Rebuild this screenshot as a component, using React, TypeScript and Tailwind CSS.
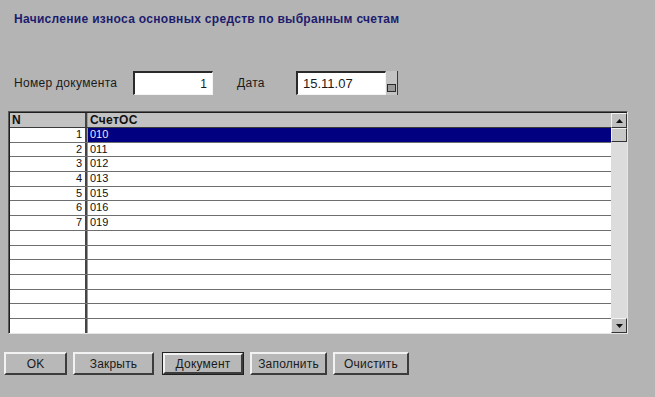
import React from "react";

const rows = ["010", "011", "012", "013", "015", "016", "019"];

function Btn({ label, w, def }: { label: string; w: string; def?: boolean }) {
  return (
    <div className={`${w} h-[23px] ${def ? "border border-[#202020]" : ""}`}>
      <div className="w-full h-full border-t-2 border-l-2 border-t-[#f2f2f2] border-l-[#f2f2f2] border-b-2 border-r-2 border-b-[#3c3c3c] border-r-[#3c3c3c] bg-[#b8b8b8] flex items-center justify-center text-[12px] text-[#1a1a1a] tracking-[0.2px]">
        {label}
      </div>
    </div>
  );
}

export default function App() {
  const bodyRows = Array.from({ length: 15 }, (_, i) => i);
  return (
    <div className="w-[655px] h-[397px] bg-[#b4b4b4] overflow-hidden" style={{ fontFamily: '"Liberation Sans", Arial, sans-serif' }}>
      <div className="pt-[12px] pl-[14px] h-[26px] text-[12px] font-bold text-[#1c1c6e] leading-[14px] tracking-[0.3px]">
        Начисление износа основных средств по выбранным счетам
      </div>
      <div className="mt-[45px] flex items-center h-[24px]">
        <div className="ml-[14px] w-[119px] text-[12px] text-[#1a1a1a] tracking-[0.3px]">Номер документа</div>
        <div className="w-[80px] h-[24px] border-t-2 border-l-2 border-t-[#2a2a2a] border-l-[#2a2a2a] border-b border-r border-b-[#f4f4f4] border-r-[#f4f4f4] bg-white flex items-center justify-end pr-[5px] text-[12px] text-[#1a1a1a]">
          1
        </div>
        <div className="ml-[24px] w-[59px] text-[12px] text-[#1a1a1a] tracking-[0.3px]">Дата</div>
        <div className="w-[90px] h-[24px] border-t-2 border-l-2 border-t-[#2a2a2a] border-l-[#2a2a2a] border-b border-r border-b-[#f4f4f4] border-r-[#f4f4f4] bg-white flex items-center pl-[5px] text-[13px] text-[#1a1a1a]">
          15.11.07
        </div>
        <div className="w-[12px] h-[24px] bg-[#c4c4c4] flex flex-col items-center justify-end pb-[3px] border-r border-[#3a3a3a]">
          <div className="w-[9px] h-[8px] border border-[#2a2a2a] bg-[#9a9a9a]" />
        </div>
      </div>
      <div className="mt-[16px] ml-[8px] w-[620px] h-[223px] border-t border-l border-t-[#5a5a5a] border-l-[#5a5a5a] border-b border-r border-b-[#e6e6e6] border-r-[#e6e6e6] flex">
        <div className="flex-1 flex flex-col overflow-hidden border-t border-l border-[#1e1e1e]">
          <div className="h-[15px] flex bg-[#c2c2c2] border-b border-[#3a3a3a] text-[12px] font-bold text-[#111] leading-[14px] shrink-0">
            <div className="w-[77px] pl-[2px] border-r-2 border-[#444]">N</div>
            <div className="flex-1 pl-[2px] border-l border-[#9a9a9a] tracking-[0.3px]">СчетОС</div>
          </div>
          <div className="flex-1 overflow-hidden">
            {bodyRows.map((i) => (
              <div key={i} className="h-[14.7px] flex border-b border-[#6e6e6e] text-[11px] leading-[13px] text-[#111]">
                <div className="w-[77px] bg-white border-r-2 border-[#444] text-right pr-[3px]">{i < rows.length ? i + 1 : ""}</div>
                <div className={`flex-1 pl-[2px] border-l border-[#9a9a9a] ${i === 0 ? "bg-[#000080] text-[#e8e8ff]" : "bg-white"}`}>
                  {i < rows.length ? rows[i] : ""}
                </div>
              </div>
            ))}
          </div>
        </div>
        <div className="w-[16px] flex flex-col bg-[#dcdcdc] border-t border-[#1e1e1e]">
          <div className="h-[15px] bg-[#c0c0c0] border-t border-l border-t-[#f2f2f2] border-l-[#f2f2f2] border-b border-r border-b-[#333] border-r-[#333] flex items-center justify-center">
            <svg width="7" height="4" viewBox="0 0 7 4"><polygon points="3.5,0 7,4 0,4" fill="#111" /></svg>
          </div>
          <div className="h-[14px] bg-[#c8c8c8] border-t border-l border-t-[#f2f2f2] border-l-[#f2f2f2] border-b border-r border-b-[#333] border-r-[#333]" />
          <div className="flex-1" />
          <div className="h-[15px] bg-[#c0c0c0] border-t border-l border-t-[#f2f2f2] border-l-[#f2f2f2] border-b border-r border-b-[#333] border-r-[#333] flex items-center justify-center">
            <svg width="7" height="4" viewBox="0 0 7 4"><polygon points="0,0 7,0 3.5,4" fill="#111" /></svg>
          </div>
        </div>
      </div>
      <div className="mt-[18px] ml-[4px] flex gap-[6px]">
        <Btn label="OK" w="w-[63px]" />
        <Btn label="Закрыть" w="w-[81px]" />
        <div className="ml-[2px]">
          <Btn label="Документ" w="w-[82px]" def />
        </div>
        <Btn label="Заполнить" w="w-[77px]" />
        <Btn label="Очистить" w="w-[76px]" />
      </div>
    </div>
  );
}
